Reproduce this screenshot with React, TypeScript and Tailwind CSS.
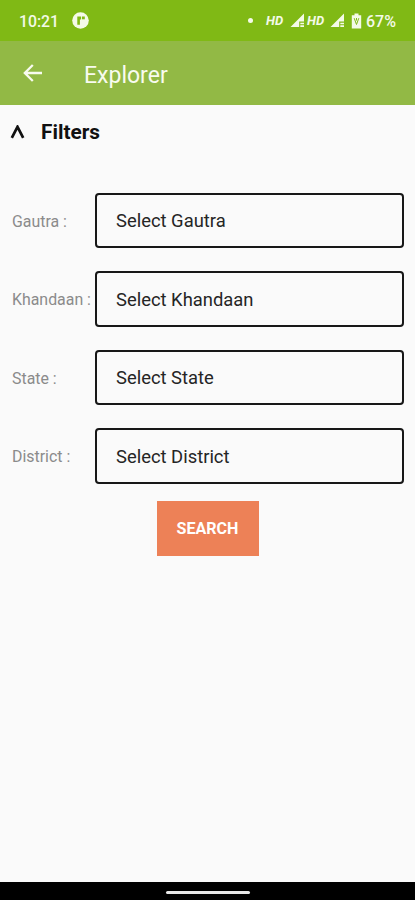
const filters = [
    { label: "Gautra :", placeholder: "Select Gautra" },
    { label: "Khandaan :", placeholder: "Select Khandaan" },
    { label: "State :", placeholder: "Select State" },
    { label: "District :", placeholder: "Select District" },
];

function Signal({ className }: { className: string }) {
    return (
        <svg className={className} width="15" height="15" viewBox="0 0 15 15" fill="#f4fae8">
            <path d="M14 0.5V8.5H9.2V14H0.5z" />
            <path d="M10.3 9.8h3.7v1.4h-3.7zM10.3 12.3h3.7V14h-3.7z" />
        </svg>
    );
}

function StatusBar() {
    return (
        <div className="flex h-[41px] items-center bg-[#80b915] pl-[19px] text-[#f4fae8]">
            <span className="w-[53px] pt-[2px] text-[15.8px] font-medium">10:21</span>
            <svg width="17" height="17" viewBox="0 0 17 17">
                <circle cx="8.5" cy="8.5" r="8.3" fill="#f4fae8" />
                <path d="M5.3 12.7V4.5h3.8v3H7.9v5.2z" fill="#80b915" />
                <rect x="10" y="4.5" width="2.8" height="2.8" fill="#80b915" />
            </svg>
            <span className="ml-[159px] h-[5px] w-[5px] rounded-full bg-[#f4fae8]" />
            <span className="ml-[13px] w-[24px] text-[13px] font-bold italic">HD</span>
            <Signal className="shrink-0" />
            <span className="ml-[2px] w-[23px] text-[13px] font-bold italic">HD</span>
            <Signal className="shrink-0" />
            <svg className="ml-[6px] shrink-0" width="11" height="16" viewBox="0 0 11 16">
                <path d="M3.5 0.5h4v1.7h2.7v13.3H0.8V2.2h2.7z" fill="#f4fae8" />
                <path d="M3.2 5.2L5.5 11.5L7.8 5.2M5.5 5v2.5" fill="none" stroke="#80b915" strokeWidth="1" />
            </svg>
            <span className="ml-[4px] pt-[2px] text-[16px] font-medium">67%</span>
        </div>
    );
}

export default function App() {
    return (
        <div className="flex h-[900px] w-[415px] flex-col overflow-hidden bg-[#fafafa] font-[Roboto,sans-serif]">
            <StatusBar />

            <header className="flex h-[64.4px] items-center bg-[#92b945] pl-[23px] text-[#f8fbef]">
                <svg width="20" height="18" viewBox="0 0 20 18" fill="none" stroke="currentColor" strokeWidth="2.3">
                    <path d="M19 9H2M9.8 1L1.8 9l8 8" />
                </svg>
                <h1 className="ml-[41px] pt-[4px] text-[23px] leading-none">Explorer</h1>
            </header>

            <main className="flex-1">
                <div className="flex h-[54px] items-center pl-[10px] text-[#111]">
                    <svg className="-mt-px" width="15" height="14" viewBox="0 0 15 14" fill="none" stroke="currentColor" strokeWidth="2.7">
                        <path d="M1.8 12.8L7.5 1.8L13.2 12.8" />
                    </svg>
                    <h2 className="ml-[16px] pt-px text-[20.8px] font-bold">Filters</h2>
                </div>

                <div className="flex flex-col gap-[23px] pt-[33.2px]">
                    {filters.map((f) => (
                        <div key={f.label} className="flex h-[55.5px] items-center pr-[11px] pl-[12px]">
                            <label className="w-[83px] shrink-0 pt-[3px] text-[15.9px] whitespace-nowrap text-[#8b8b8b]">
                                {f.label}
                            </label>
                            <button className="h-full flex-1 rounded-[4px] border-2 border-[#171717] pt-px pl-[19px] text-left text-[18.4px] text-[#252525]">
                                {f.placeholder}
                            </button>
                        </div>
                    ))}
                </div>

                <button className="mx-auto mt-[17px] block h-[55px] w-[102px] bg-[#ed8157] pt-[2px] text-[16.1px] font-bold text-white">
                    SEARCH
                </button>
            </main>

            <footer className="flex h-[18px] items-center justify-center bg-black pt-[2px]">
                <div className="h-[3px] w-[84px] rounded-full bg-[#e8e8e8]" />
            </footer>
        </div>
    );
}
